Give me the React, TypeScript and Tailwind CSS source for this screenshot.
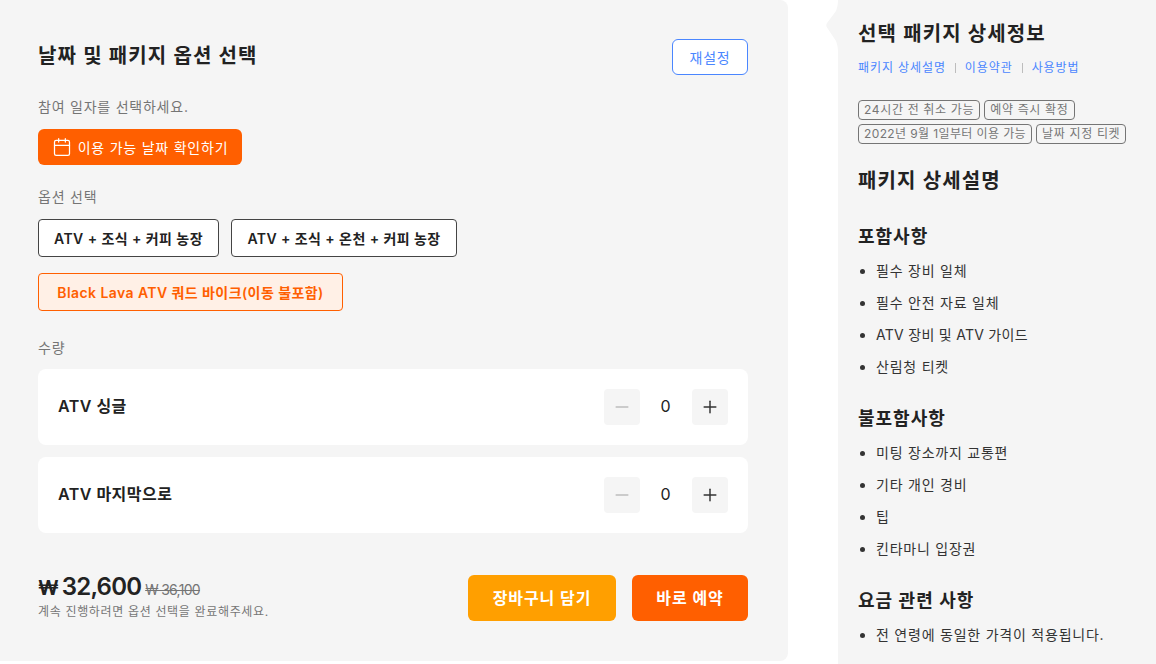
import { Calendar, Minus, Plus } from 'lucide-react';

function Counter({ name }: { name: string }) {
  return (
    <div className="flex h-[76px] items-center justify-between rounded-lg bg-white pl-5 pr-5">
      <span className="mb-[2px] text-[16px] font-semibold !tracking-[0.03em] text-[#222]">{name}</span>
      <div className="flex items-center">
        <button className="flex h-9 w-9 items-center justify-center rounded bg-[#f5f5f5] text-[#bdbdbd]">
          <Minus className="h-5 w-5" strokeWidth={1.75} />
        </button>
        <span className="mb-[2px] w-[52px] text-center text-[16px] text-[#222]">0</span>
        <button className="flex h-9 w-9 items-center justify-center rounded bg-[#f5f5f5] text-[#333]">
          <Plus className="h-5 w-5" strokeWidth={1.75} />
        </button>
      </div>
    </div>
  );
}

function Section({ title, items }: { title: string; items: string[] }) {
  return (
    <div className="mb-[22px]">
      <h3 className="mb-[5px] text-[18px] leading-[27px] font-semibold text-[#222]">{title}</h3>
      <ul className="list-disc pl-[18px] text-[14px] text-[#333]">
        {items.map((item) => (
          <li key={item} className={item.includes('ATV') ? 'h-[32px] leading-[32px] !tracking-[0.02em]' : 'h-[32px] leading-[32px]'}>
            {item}
          </li>
        ))}
      </ul>
    </div>
  );
}

const tagClass = 'rounded border border-[#757575] px-[5px] text-[12px] leading-[18px] text-[#757575]';

export default function App() {
  return (
    <div
      className="flex h-[664px] w-[1156px] overflow-hidden bg-white [&_*]:tracking-[0.055em]"
      style={{ fontFamily: 'Inter, "Noto Sans CJK KR", sans-serif' }}
    >
      {/* Left panel */}
      <div className="flex h-[661px] w-[788px] shrink-0 flex-col rounded-r-lg bg-[#f5f5f5] pl-[38px] pr-[40px] pt-[39px]">
        <div className="flex h-9 items-center justify-between">
          <h2 className="mb-[2px] text-[20px] font-semibold text-[#222]">날짜 및 패키지 옵션 선택</h2>
          <button className="h-9 w-[76px] rounded-md border border-[#4a86ff] bg-white text-[14px] text-[#4a86ff]">
            재설정
          </button>
        </div>

        <p className="mt-[21px] text-[14px] leading-[21px] text-[#757575]">참여 일자를 선택하세요.</p>
        <button className="mt-[12px] flex h-9 w-[204px] items-center justify-center gap-[6px] rounded-md bg-[#ff5f00] text-[14px] text-white">
          <Calendar className="h-5 w-5" strokeWidth={1.5} />
          이용 가능 날짜 확인하기
        </button>

        <p className="mt-[21px] text-[14px] leading-[21px] text-[#757575]">옵션 선택</p>
        <div className="mt-[12px] flex gap-3">
          <button className="h-[38px] w-[181px] rounded border border-[#444] bg-white text-[14px] font-semibold !tracking-[0.03em] text-[#222]">
            ATV + 조식 + 커피 농장
          </button>
          <button className="h-[38px] w-[226px] rounded border border-[#444] bg-white text-[14px] font-semibold !tracking-[0.03em] text-[#222]">
            ATV + 조식 + 온천 + 커피 농장
          </button>
        </div>
        <button className="mt-4 h-[38px] w-[305px] rounded border border-[#ff5f00] bg-[#fff0e6] text-[14px] font-semibold !tracking-[0.03em] text-[#ff5f00]">
          Black Lava ATV 쿼드 바이크(이동 불포함)
        </button>

        <p className="mt-[26px] text-[14px] leading-[21px] text-[#757575]">수량</p>
        <div className="mt-[11px] flex flex-col gap-3">
          <Counter name="ATV 싱글" />
          <Counter name="ATV 마지막으로" />
        </div>

        <div className="mt-[42px] flex items-start justify-between">
          <div>
            <div className="flex items-baseline">
              <span className="mr-[4px] text-[20px] leading-[24px] font-bold !tracking-[-1px] text-[#222]">₩</span>
              <span className="mr-[4px] text-[24px] leading-[24px] font-semibold !tracking-[-0.8px] text-[#222]">32,600</span>
              <span className="text-[14px] !tracking-[-0.7px] text-[#757575] line-through">₩ 36,100</span>
            </div>
            <p className="mt-[3px] text-[12px] leading-[18px] text-[#757575]">
              계속 진행하려면 옵션 선택을 완료해주세요.
            </p>
          </div>
          <div className="flex gap-4">
            <button className="h-[46px] w-[148px] rounded-md bg-[#ff9f00] text-[16px] font-semibold text-white">
              장바구니 담기
            </button>
            <button className="h-[46px] w-[116px] rounded-md bg-[#ff5f00] text-[16px] font-semibold text-white">
              바로 예약
            </button>
          </div>
        </div>
      </div>

      {/* Right panel */}
      <div className="relative ml-[50px] flex-1 bg-[#f5f5f5] pl-5 pt-[21px]">
        <svg className="absolute left-[-12px] top-0" width="12" height="52" viewBox="0 0 12 52" fill="#f5f5f5">
          <path d="M12 0C12 5 11 8 10 11L1 23C0 24.500 0 26 1 27.500L10 41C11 44 12 47 12 52Z" />
        </svg>
        <h2 className="text-[20px] leading-[26px] font-semibold text-[#222]">선택 패키지 상세정보</h2>
        <div className="mt-[12px] flex items-center text-[12px] leading-[18px] text-[#4a86ff]">
          <span className="!tracking-[0.075em]">패키지 상세설명</span>
          <span className="mx-[9px] h-[10px] w-px bg-[#bdbdbd]" />
          <span className="!tracking-[0.075em]">이용약관</span>
          <span className="mx-[9px] h-[10px] w-px bg-[#bdbdbd]" />
          <span className="!tracking-[0.075em]">사용방법</span>
        </div>
        <div className="mt-[23px] flex w-[290px] flex-wrap gap-x-1 gap-y-1">
          <span className={tagClass}>24시간 전 취소 가능</span>
          <span className={tagClass}>예약 즉시 확정</span>
          <span className={`${tagClass} !tracking-[0.032em]`}>2022년 9월 1일부터 이용 가능</span>
          <span className={tagClass}>날짜 지정 티켓</span>
        </div>
        <h2 className="mb-[28px] mt-[23px] text-[20px] leading-[28px] font-semibold text-[#222]">패키지 상세설명</h2>
        <Section title="포함사항" items={['필수 장비 일체', '필수 안전 자료 일체', 'ATV 장비 및 ATV 가이드', '산림청 티켓']} />
        <Section title="불포함사항" items={['미팅 장소까지 교통편', '기타 개인 경비', '팁', '킨타마니 입장권']} />
        <div className="mt-px">
          <Section title="요금 관련 사항" items={['전 연령에 동일한 가격이 적용됩니다.']} />
        </div>
      </div>
    </div>
  );
}
